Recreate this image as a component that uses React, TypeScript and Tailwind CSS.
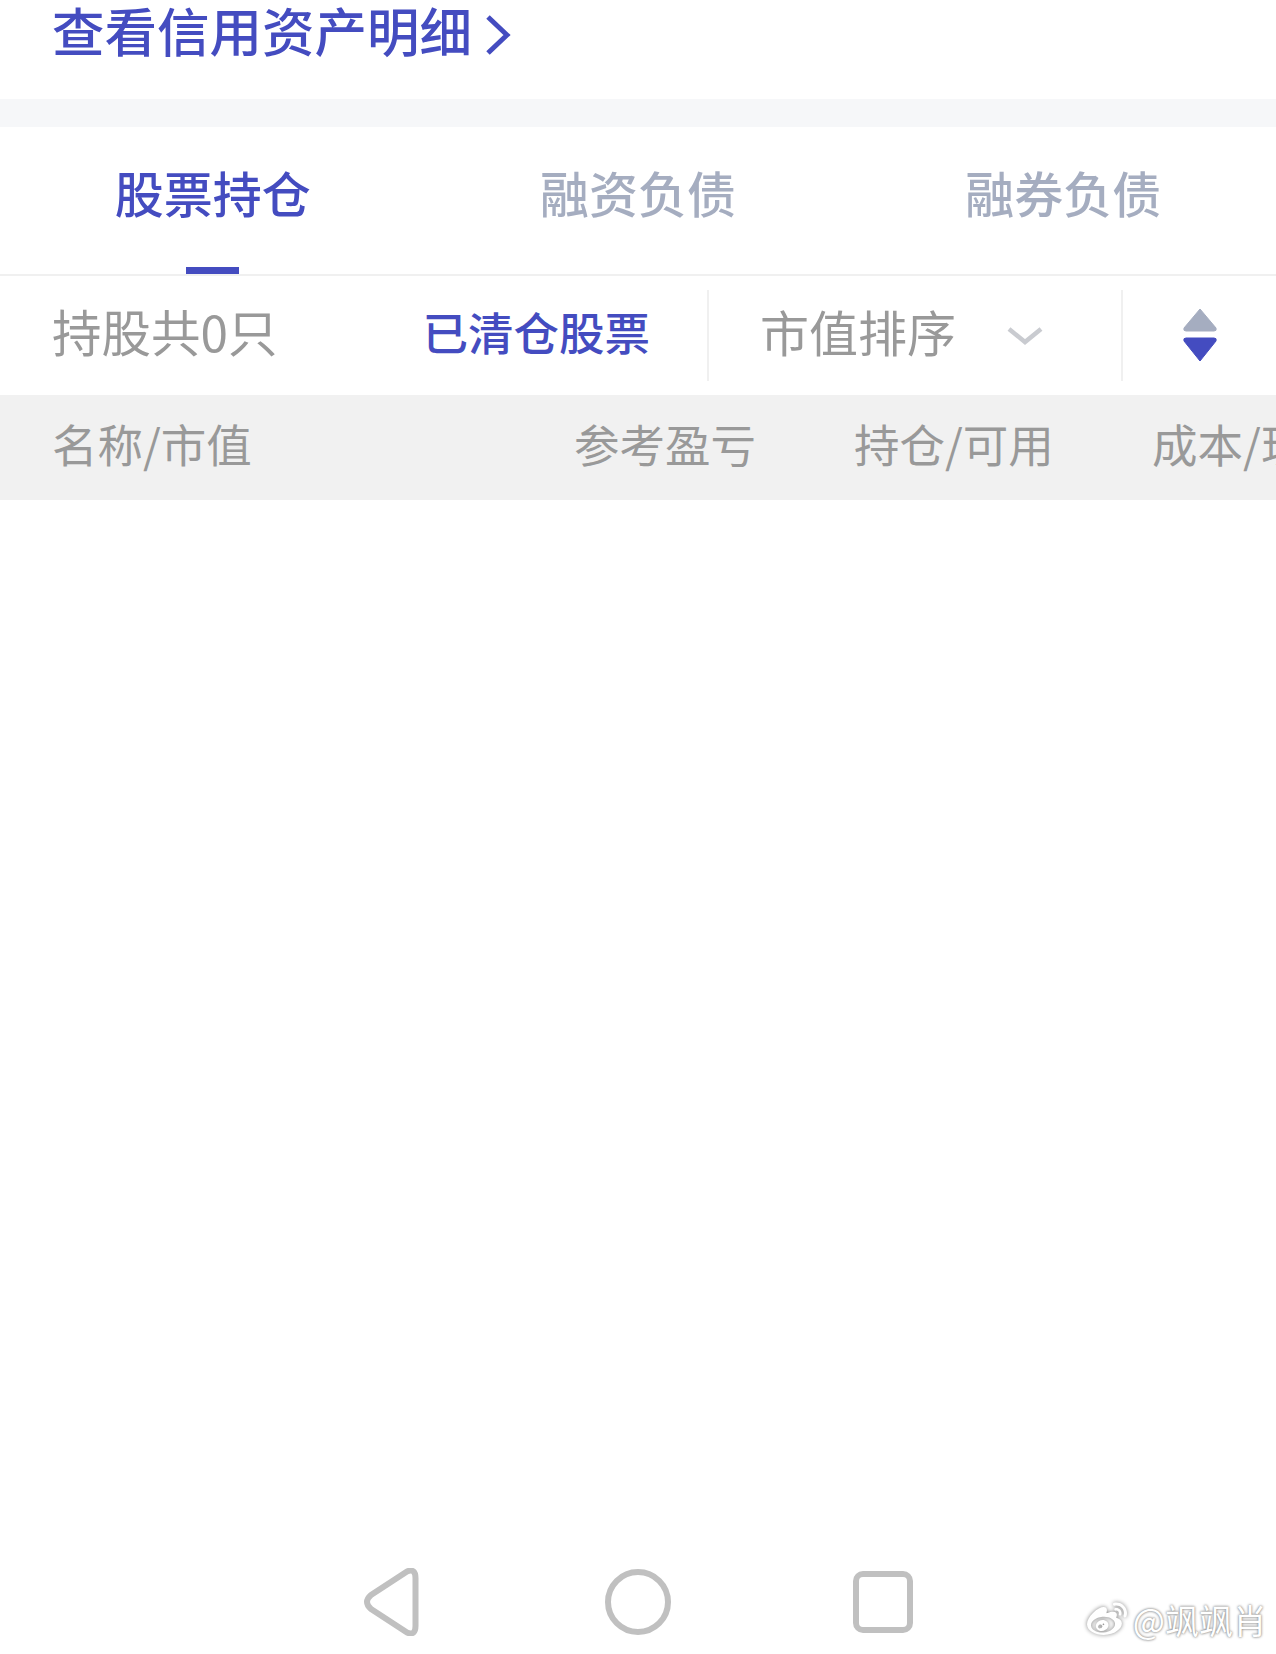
import { FaWeibo } from "react-icons/fa";

const font = "font-['Noto_Sans_CJK_SC','Noto_Sans',sans-serif]";

export default function App() {
  return (
    <div className={`${font} relative flex h-[1654px] w-[1276px] flex-col overflow-hidden bg-white`}>
      {/* credit link */}
      <div className="flex h-[99px] items-start pl-[52px]">
        <a className="flex h-[58px] items-center gap-[13px] text-[52.5px] font-medium leading-[58px] text-[#444cc0]">
          <span>查看信用资产明细</span>
          <svg width="26" height="40" viewBox="0 0 26 40" fill="none" className="mt-[11px]">
            <path d="M3 2 L22 20 L3 38" stroke="#444cc0" strokeWidth="5" />
          </svg>
        </a>
      </div>
      <div className="h-[28px] bg-[#f6f7f9]" />

      {/* tabs */}
      <div className="grid h-[149px] grid-cols-3 border-b-2 border-[#f0f0f0] text-[49px] font-medium leading-[56px]">
        <div className="relative flex items-start justify-center pt-[37px] text-[#444cc0]">
          股票持仓
          <span className="absolute bottom-0 left-[186px] h-[7px] w-[53px] bg-[#444cc0]" />
        </div>
        <div className="flex items-start justify-center pt-[37px] text-[#a5adc0]">融资负债</div>
        <div className="flex items-start justify-center pt-[37px] text-[#a5adc0]">融券负债</div>
      </div>

      {/* toolbar */}
      <div className="flex h-[119px] items-center">
        <div className="flex w-[707px] items-center justify-between pl-[52px] pr-[57px]">
          <span className="pb-[10px] text-[49.5px] leading-[56px] text-[#999999]">持股共0只</span>
          <span className="pb-[10px] text-[45.5px] font-medium leading-[56px] text-[#444cc0]">已清仓股票</span>
        </div>
        <div className="flex h-[91px] w-[416px] items-center border-x-2 border-[#f0f0f0] pl-[51px]">
          <span className="pb-[10px] text-[49px] leading-[56px] text-[#999999]">市值排序</span>
          <svg width="38" height="20" viewBox="0 0 38 20" fill="none" className="ml-[50px]">
            <path d="M3 3 L19 16 L35 3" stroke="#c9cbd0" strokeWidth="4.5" />
          </svg>
        </div>
        <div className="flex flex-1 justify-center">
          <svg width="36" height="54" viewBox="0 0 36 54" className="mb-[2px]">
            <path d="M18 1 L34 20 Q35 23 32 23 L4 23 Q1 23 2 20 Z" fill="#a5adc0" stroke="#a5adc0" strokeLinejoin="round" />
            <path d="M18 53 L34 33 Q35 30 32 30 L4 30 Q1 30 2 33 Z" fill="#444cc0" stroke="#444cc0" strokeLinejoin="round" />
          </svg>
        </div>
      </div>

      {/* table header */}
      <div className="flex h-[105px] items-center overflow-hidden whitespace-nowrap bg-[#f1f1f1] text-[45.5px] leading-[56px] text-[#999999]">
        <span className="w-[574px] shrink-0 pb-[9px] pl-[52px]">名称/市值</span>
        <span className="w-[280px] shrink-0 pb-[9px]">参考盈亏</span>
        <span className="w-[298px] shrink-0 pb-[9px]">持仓/可用</span>
        <span className="shrink-0 pb-[9px]">成本/现价</span>
      </div>

      {/* android nav */}
      <div className="mt-auto flex h-[86px] items-start justify-center">
        <svg width="56" height="68" viewBox="0 0 56 68" fill="none" className="mr-[186px]">
          <path d="M8 27 L44 3.5 Q52.5 0 52.5 10 L52.5 58 Q52.5 68 44 64.5 L8 41 Q0 34 8 27 Z" stroke="#c0c0c0" strokeWidth="6" strokeLinejoin="round" />
        </svg>
        <svg width="66" height="66" viewBox="0 0 66 66" fill="none" className="mr-[182px] mt-[1px]">
          <circle cx="33" cy="33" r="30" stroke="#c0c0c0" strokeWidth="6" />
        </svg>
        <svg width="60" height="62" viewBox="0 0 60 62" fill="none" className="mt-[3px]">
          <rect x="3" y="3" width="54" height="56" rx="7" stroke="#c0c0c0" strokeWidth="6" />
        </svg>
      </div>

      {/* watermark */}
      <div className="absolute bottom-[12px] right-[9px] flex items-center gap-[3px] text-[34px] leading-[44px] text-white [text-shadow:0_0_3px_#8a8a8a,0_0_2px_#999999]">
        <FaWeibo className="h-[40px] w-[46px] text-white drop-shadow-[0_0_2px_#808080]" />
        <span>@飒飒肖</span>
      </div>
    </div>
  );
}
